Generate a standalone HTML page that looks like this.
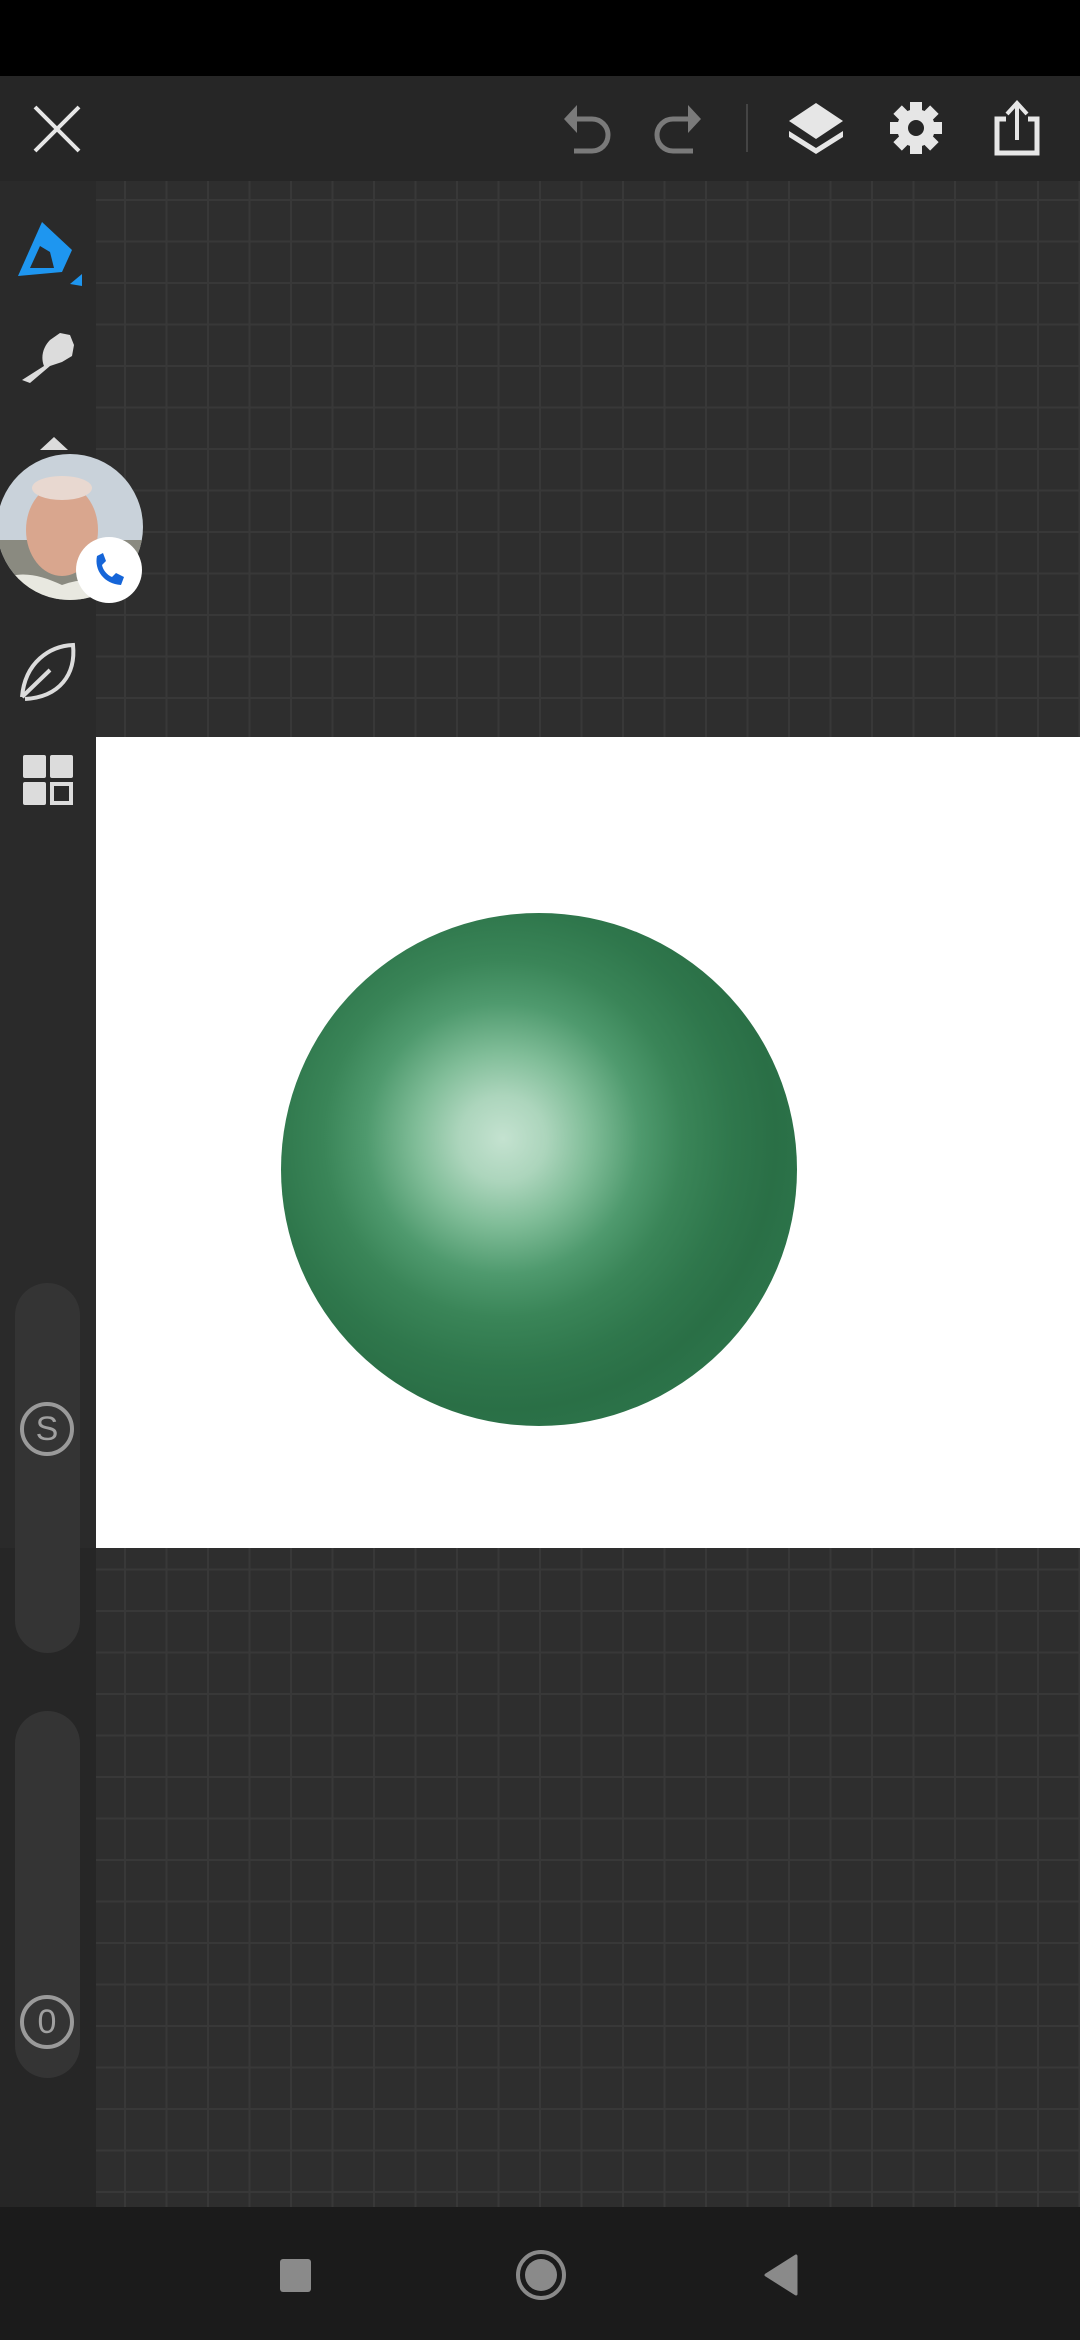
<!DOCTYPE html>
<html><head><meta charset="utf-8"><style>
html,body{margin:0;padding:0}
body{width:1080px;height:2340px;position:relative;overflow:hidden;background:#2e2e2e;font-family:"Liberation Sans",sans-serif}
.abs{position:absolute}
#status{left:0;top:0;width:1080px;height:76px;background:#000}
#top{left:0;top:76px;width:1080px;height:105px;background:#262626}
#grid{left:96px;top:181px;width:984px;height:2026px;background-color:#2e2e2e;
background-image:linear-gradient(to right,#383838 0,#383838 2px,transparent 2px),linear-gradient(to bottom,#383838 0,#383838 2px,transparent 2px);
background-size:41.5px 41.5px;background-position:28px 18px}
#side{left:0;top:181px;width:96px;height:2026px;background:#262626}
#sideTop{left:0;top:181px;width:96px;height:1367px;background:#2a2a2a}
#canvas{left:96px;top:737px;width:984px;height:811px;background:#fff}
#sphere{left:281px;top:913px;width:516px;height:513px;border-radius:50%;
background:radial-gradient(ellipse 60% 60% at 43% 44%,#c4e2d0 0%,#acd5bc 14%,#80bd98 28%,#4f9a6e 44%,#3a8558 58%,#2f774c 74%,#2a6f46 88%,#2c744a 100%)}
#nav{left:0;top:2207px;width:1080px;height:133px;background:#1b1b1b}
.pill{left:15px;width:65px;background:#343434;border-radius:33px}
.circ{width:54px;height:54px;border:4px solid #9a9a9a;border-radius:50%;box-sizing:border-box;color:#a0a0a0;font-size:34px;text-align:center;line-height:46px;left:20px}
</style></head><body>
<div class="abs" id="status"></div>
<div class="abs" id="top"></div>
<div class="abs" id="grid"></div>
<div class="abs" id="side"></div>
<div class="abs" id="sideTop"></div>
<div class="abs" id="canvas"></div>
<div class="abs" id="sphere"></div>
<div class="abs" id="nav"></div>

<svg class="abs" style="left:0;top:0" width="1080" height="2340">
 <path d="M35 107 L79 151 M79 107 L35 151" stroke="#e6e6e6" stroke-width="4" fill="none"/>
 <path d="M570 119 H592 A16 16 0 0 1 592 151 H574" stroke="#7a7a7a" stroke-width="5" fill="none"/>
 <path d="M564 119 L577 105 L577 133 Z" fill="#7a7a7a"/>
 <path d="M695 119 H673 A16 16 0 0 0 673 151 H693" stroke="#7a7a7a" stroke-width="5" fill="none"/>
 <path d="M701 119 L688 105 L688 133 Z" fill="#7a7a7a"/>
 <line x1="747" y1="104" x2="747" y2="152" stroke="#444" stroke-width="2"/>
 <path d="M816 103 L843 121 L816 139 L789 121 Z" fill="#e6e6e6"/>
 <path d="M789 137 L816 154 L843 137 L843 131 L816 148 L789 131 Z" fill="#e6e6e6"/>
 <g transform="translate(916 128)" fill="#e6e6e6">
  <circle r="19"/>
  <g id="t"><rect x="-6" y="-26" width="12" height="12"/></g>
  <use href="#t" transform="rotate(45)"/><use href="#t" transform="rotate(90)"/><use href="#t" transform="rotate(135)"/>
  <use href="#t" transform="rotate(180)"/><use href="#t" transform="rotate(225)"/><use href="#t" transform="rotate(270)"/><use href="#t" transform="rotate(315)"/>
  <circle r="8" fill="#262626"/>
 </g>
 <path d="M1006 119 H997 V153 H1037 V119 H1028" stroke="#e6e6e6" stroke-width="5" fill="none"/>
 <path d="M1017 140 V106" stroke="#e6e6e6" stroke-width="4"/>
 <path d="M1007 114 L1017 103 L1027 114" stroke="#e6e6e6" stroke-width="4" fill="none"/>
 <!-- brush blue -->
 <path d="M18 276 L42 222 L72 250 L62 272 Z" fill="#1e96f0"/>
 <path d="M30 268 L40 246 L50 252 L54 268 Z" fill="#2a2a2a"/>
 <path d="M70 284 L82 274 L82 286 Z" fill="#1e96f0"/>
 <!-- smudge -->
 <path d="M22 380 L44 366 C40 356 44 346 50 340 L60 333 L70 335 L74 345 L72 356 L62 362 L50 366 L30 383 Z" fill="#dcdcdc"/>
 <path d="M40 450 L54 437 L68 450 Z" fill="#dcdcdc"/>
 <!-- leaf -->
 <path d="M22 697 C25 662 50 646 73 645 C76 674 60 697 25 699 M22 697 L50 670" stroke="#dcdcdc" stroke-width="4" fill="none"/>
 <rect x="23" y="755" width="23" height="23" rx="2" fill="#dcdcdc"/>
 <rect x="50" y="755" width="23" height="23" rx="2" fill="#dcdcdc"/>
 <rect x="23" y="782" width="23" height="23" rx="2" fill="#dcdcdc"/>
 <rect x="52" y="784" width="19" height="19" stroke="#dcdcdc" stroke-width="4" fill="none"/>
 <defs><clipPath id="av"><circle cx="70" cy="527" r="73"/></clipPath></defs>
 <g clip-path="url(#av)">
  <rect x="-10" y="450" width="160" height="160" fill="#c9d2da"/>
  <rect x="-10" y="540" width="160" height="70" fill="#8a8a80"/>
  <ellipse cx="62" cy="530" rx="36" ry="46" fill="#d9a68e"/>
  <ellipse cx="62" cy="488" rx="30" ry="12" fill="#e8d8d0"/>
  <path d="M0 580 C20 570 40 575 62 585 C90 575 110 580 140 600 V620 H0 Z" fill="#e8e8e0"/>
 </g>
 <circle cx="109" cy="570" r="33" fill="#fff"/>
 <path d="M97 556 C94 570 104 584 121 585 L124 577 L116 573 L112 577 C107 575 103 570 102 565 L106 561 L103 553 Z" fill="#1565d8"/>
 <!-- nav -->
 <rect x="280" y="2259" width="31" height="33" rx="3" fill="#8a8a8a"/>
 <circle cx="541" cy="2275" r="23" stroke="#8a8a8a" stroke-width="4" fill="none"/>
 <circle cx="541" cy="2275" r="16" fill="#8a8a8a"/>
 <path d="M766 2275 L796 2256 L796 2294 Z" fill="#8a8a8a" stroke="#8a8a8a" stroke-linejoin="round" stroke-width="3"/>
</svg>

<div class="abs pill" style="top:1283px;height:370px"></div>
<div class="abs pill" style="top:1711px;height:367px"></div>
<div class="abs circ" style="top:1402px">S</div>
<div class="abs circ" style="top:1995px">0</div>
</body></html>
